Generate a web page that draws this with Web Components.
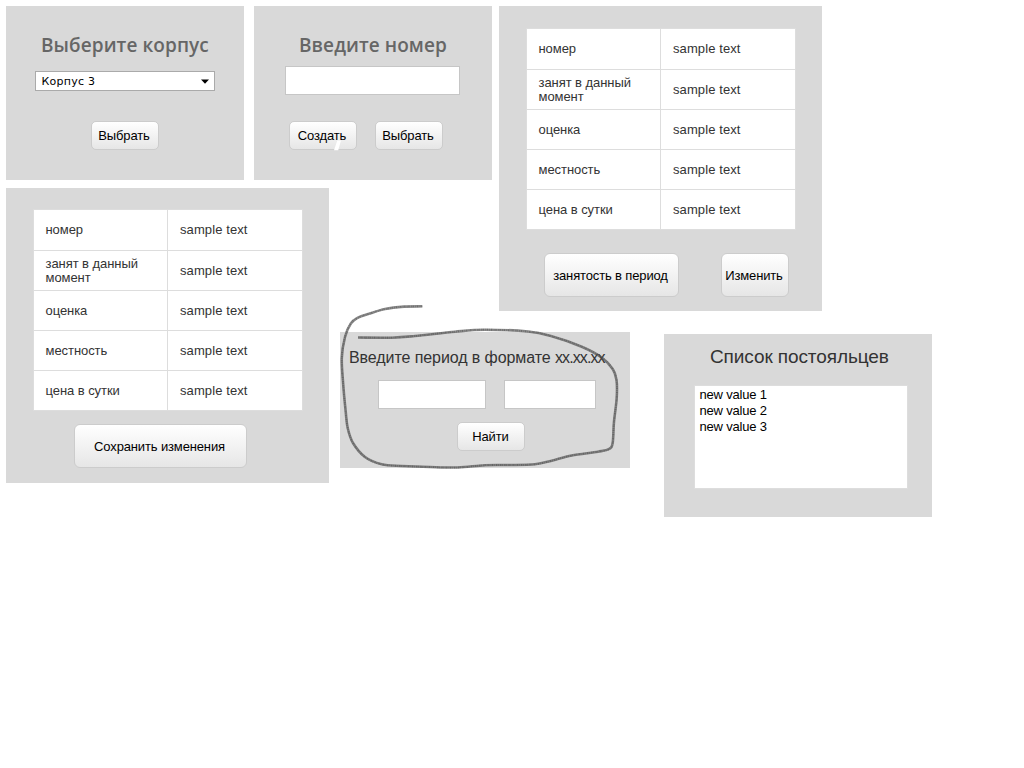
<!DOCTYPE html>
<html lang="ru">
<head>
<meta charset="utf-8">
<title>Макет: номера</title>
<style>
html, body { margin: 0; background: #fff; }
body { font-family: "Liberation Sans", Arial, sans-serif; width: 1024px; height: 768px; overflow: hidden; }
</style>
</head>
<body>
<room-board></room-board>
<script>
function define(name, html, setup) {
  const tpl = document.createElement('template');
  tpl.innerHTML = html;
  customElements.define(name, class extends HTMLElement {
    constructor() {
      super();
      this.attachShadow({ mode: 'open' }).append(tpl.content.cloneNode(true));
    }
    connectedCallback() { if (setup) setup(this, this.shadowRoot); }
  });
}

define('ui-panel', `
<style>:host { display: flex; flex-direction: column; flex: none; box-sizing: border-box; background: #d9d9d9; }</style>
<slot></slot>`);

define('ui-title', `
<style>:host { display: block; flex: none; white-space: nowrap; color: #333; }
:host([strong]) { font: 600 19px/26px "Open Sans", "Noto Sans", sans-serif; color: #666; letter-spacing: .08px; }</style>
<slot></slot>`);

define('ui-button', `
<style>:host { display: flex; flex: none; box-sizing: border-box; align-items: center; justify-content: center;
  width: 68px; height: 29px; border: 1px solid #ccc; border-radius: 5px; padding: 0 2px 0 0;
  background: linear-gradient(#fff, #e6e6e6); color: #000; font-size: 13px; line-height: 16px; white-space: nowrap;
  letter-spacing: -.14px; }
:host([tall]) { height: 44px; border-radius: 6px; padding: 2px 2px 0 0; }</style>
<slot></slot>`);

define('ui-input', `
<style>:host { display: block; flex: none; box-sizing: border-box; height: 29px; background: #fff; border: 1px solid #c6c6c6; }</style>`);

define('ui-select', `
<style>:host { display: flex; flex: none; box-sizing: border-box; align-items: center; justify-content: space-between;
  width: 180px; height: 20px; padding: 0 5px; background: #fff; border: 1px solid #aaa; color: #000;
  font: 11px/16px "DejaVu Sans", sans-serif; letter-spacing: .25px; }
span { padding: 2px 0 0 .5px; }
svg { display: block; }</style>
<span><slot></slot></span>
<svg width="8" height="5" viewBox="0 0 8 5"><path d="M0 .5h8L4 4.8z" fill="#000"/></svg>`);

define('ui-table', `
<style>:host { display: grid; flex: none; box-sizing: border-box; width: 270px; height: 202px; border: 1px solid #ddd;
  grid-template-columns: 133px 134px; grid-template-rows: 40px repeat(4, 39px); gap: 1px; background: #ddd;
  color: #333; font-size: 13px; line-height: 14px; }
div { display: flex; align-items: center; background: #fff; padding-left: 11.5px; letter-spacing: -.06px; }
div:nth-of-type(even) { padding-left: 12px; letter-spacing: .1px; }</style>`, (el, root) => {
  for (const label of ['номер', 'занят в данный момент', 'оценка', 'местность', 'цена в сутки'])
    for (const text of [label, 'sample text']) {
      const cell = document.createElement('div');
      cell.textContent = text;
      root.append(cell);
    }
});

define('ui-list', `
<style>:host { display: block; flex: none; box-sizing: border-box; width: 214px; height: 104px; background: #fff;
  border: 1px solid #ddd; padding: 1px 4.5px; font-size: 13px; line-height: 16px; color: #000; letter-spacing: -.2px; }</style>
<slot></slot>`);

/* Freehand pencil loop drawn over the period form, smoothed through its points */
const loop = [[422.3,306.3],[404,306.6],[385,309],[368.3,314],[358,317.7],[351,323.3],[345,337],[341.8,358],[343,381.7],[345.7,411.7],[347.7,428],[353,443],[365,457],[381.7,464.3],[401.7,466],[430,467],[458,467.5],[485,465.2],[510,465],[535,464.3],[551.7,460.7],[571.7,455.5],[598,451.7],[609,449],[612.7,442.7],[614,421.7],[616.7,398],[616.5,380],[612.7,369],[601.7,357.5],[581.7,346.7],[551.7,336.3],[528,331.5],[485,329.7],[455,331.7],[415,336],[391.7,337.7],[358,337.5]];
function smooth(pts) {
  let d = 'M' + pts[0];
  for (let i = 0; i < pts.length - 1; i++) {
    const a = pts[i - 1] || pts[i], b = pts[i], c = pts[i + 1], e = pts[i + 2] || c;
    d += 'C' + [b[0] + (c[0] - a[0]) / 6, b[1] + (c[1] - a[1]) / 6, c[0] - (e[0] - b[0]) / 6, c[1] - (e[1] - b[1]) / 6, c[0], c[1]].map(n => n.toFixed(1));
  }
  return d;
}
define('pencil-loop', `
<style>:host { position: absolute; left: 334px; top: 298px; pointer-events: none; }
svg { display: block; }</style>
<svg width="290" height="176" viewBox="334 298 290 176" fill="none" stroke="#4c4c4c" stroke-linecap="butt" stroke-linejoin="round">
<path d="${smooth(loop)}" stroke-width="2.6" opacity=".64"/>
<path d="${smooth(loop)}" stroke-width="1.8" stroke-dasharray="1.2 .9 .7 1.4" opacity=".5"/>
</svg>`);

/* Short white brush mark over the button's lower edge */
define('white-mark', `
<style>:host { position: absolute; left: 332px; top: 138px; pointer-events: none; } svg { display: block; }</style>
<svg width="12" height="14" viewBox="0 0 12 14"><path d="M5.3 2.5H9L6.2 12.3H2z" fill="#fff"/></svg>`);

define('room-board', `
<style>
:host { display: flex; position: relative; padding: 6px; gap: 7px; box-sizing: border-box; width: 1024px; height: 768px; }
.left { display: flex; flex-direction: column; gap: 8px; width: 486px; flex: none; }
.right { display: flex; flex-direction: column; align-items: flex-start; flex: none; }
.row { display: flex; align-items: flex-start; flex: none; }
.building, .number { width: 238px; height: 174px; padding-top: 26px; }
.building ui-title { margin-left: 35px; }
.building ui-select { margin: 13px 0 30px 29px; }
.building ui-button { margin-left: 85px; }
.number ui-title { margin-left: 45px; }
.number ui-input { width: 175px; margin: 8px 0 26px 31px; }
.number .row { gap: 18px; margin-left: 35px; }
.info { width: 323px; height: 305px; padding: 22px 0 0 27px; }
.info .row { margin: 23px 0 0 18px; gap: 42px; }
.edit { width: 323px; height: 295px; padding: 21px 0 0 27px; }
.edit ui-button { width: 173px; margin: 13px 0 0 41px; }
.period { width: 290px; height: 136px; margin: 144px 0 0 11px; padding-top: 16px; }
.period ui-title { font-size: 16px; line-height: 20px; margin-left: 9px; letter-spacing: -.08px; }
.period ui-title span { letter-spacing: -.9px; }
.period .row { gap: 18px; margin: 12px 0 13px 38px; }
.period ui-button { margin-left: 117px; letter-spacing: -.1px; padding-right: 1px; }
.guests { width: 268px; height: 183px; margin: 23px 0 0 165px; padding: 12px 0 0 30px; }
.guests ui-title { font-size: 19px; line-height: 22px; margin: 0 0 17px 16px; letter-spacing: -.1px; }
</style>
<div class="left">
  <div class="row" style="gap:10px">
    <ui-panel class="building"><ui-title strong>Выберите корпус</ui-title><ui-select>Корпус 3</ui-select><ui-button>Выбрать</ui-button></ui-panel>
    <ui-panel class="number"><ui-title strong>Введите номер</ui-title><ui-input></ui-input>
      <div class="row"><ui-button>Создать</ui-button><ui-button>Выбрать</ui-button></div></ui-panel>
  </div>
  <div class="row">
    <ui-panel class="edit"><ui-table></ui-table><ui-button tall>Сохранить изменения</ui-button></ui-panel>
    <ui-panel class="period"><ui-title>Введите период в формате <span>xx.xx.xx</span></ui-title>
      <div class="row"><ui-input style="width:108px"></ui-input><ui-input style="width:92px"></ui-input></div>
      <ui-button>Найти</ui-button></ui-panel>
  </div>
</div>
<div class="right">
  <ui-panel class="info"><ui-table></ui-table>
    <div class="row"><ui-button tall style="width:135px">занятость в период</ui-button><ui-button tall>Изменить</ui-button></div></ui-panel>
  <ui-panel class="guests"><ui-title>Список постояльцев</ui-title>
    <ui-list><div>new value 1</div><div>new value 2</div><div>new value 3</div></ui-list></ui-panel>
</div>
<pencil-loop></pencil-loop>
<white-mark></white-mark>`);
</script>
</body>
</html>
